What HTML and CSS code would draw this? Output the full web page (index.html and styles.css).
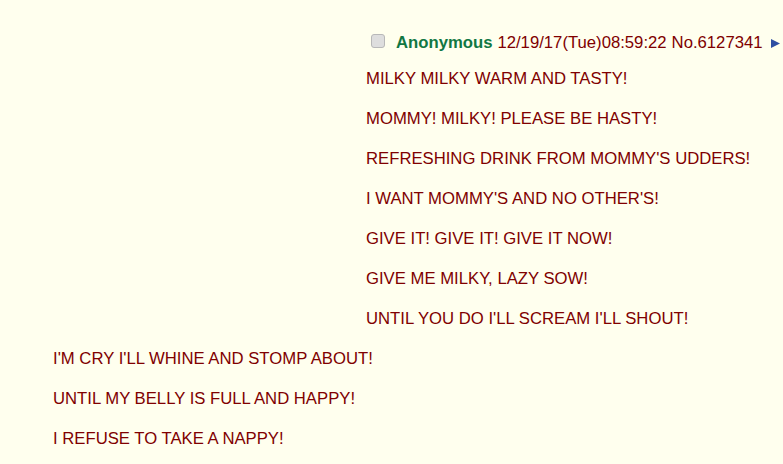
FILE: index.html
```html
<!DOCTYPE html>
<html lang="en">
<head>
  <meta charset="UTF-8" />
  <title>Post No.6127341</title>
  <link rel="stylesheet" href="styles.css">
</head>
<body>
  <div class="post">
    <div class="file-space"></div>
    <div class="post-info">
      <span class="check"></span>
      <span class="name">Anonymous</span>
      <span class="date">12/19/17(Tue)08:59:22</span>
      <span class="num">No.6127341</span>
      <svg class="menu-btn" width="9" height="9" viewBox="0 0 9 9"><polygon points="0,0 9,4.5 0,9" fill="#2f4fa3"/></svg>
    </div>
    <div class="post-message">
      <p>MILKY MILKY WARM AND TASTY!</p>
      <p>MOMMY! MILKY! PLEASE BE HASTY!</p>
      <p>REFRESHING DRINK FROM MOMMY'S UDDERS!</p>
      <p>I WANT MOMMY'S AND NO OTHER'S!</p>
      <p>GIVE IT! GIVE IT! GIVE IT NOW!</p>
      <p>GIVE ME MILKY, LAZY SOW!</p>
      <p>UNTIL YOU DO I'LL SCREAM I'LL SHOUT!</p>
      <p>I'M CRY I'LL WHINE AND STOMP ABOUT!</p>
      <p>UNTIL MY BELLY IS FULL AND HAPPY!</p>
      <p>I REFUSE TO TAKE A NAPPY!</p>
    </div>
  </div>
</body>
</html>
```

FILE: styles.css
```css
body {
  margin: 0;
  padding: 0;
  background: #ffffee;
  color: #800000;
  font-family: "Liberation Sans", Arial, sans-serif;
  font-size: 16.7px;
  line-height: 20px;
  overflow: hidden;
}
.post {
  padding: 33px 0 0 53px;
}
.file-space {
  float: left;
  width: 313px;
  height: 300px;
}
.post-info {
  display: flex;
  align-items: center;
  height: 20px;
  margin-bottom: 16px;
  padding-left: 5px;
  white-space: nowrap;
}
.check {
  width: 12px;
  height: 12px;
  border: 1px solid #b8b8b8;
  border-radius: 3px;
  background: #dedede;
  margin-right: 11px;
  margin-top: -4px;
}
.name {
  color: #117743;
  font-weight: 700;
  margin-right: 5px;
}
.date {
  margin-right: 5px;
}
.menu-btn {
  margin-left: 8px;
  margin-top: 1px;
}
.post-message p {
  margin: 0 0 20px;
}
```
